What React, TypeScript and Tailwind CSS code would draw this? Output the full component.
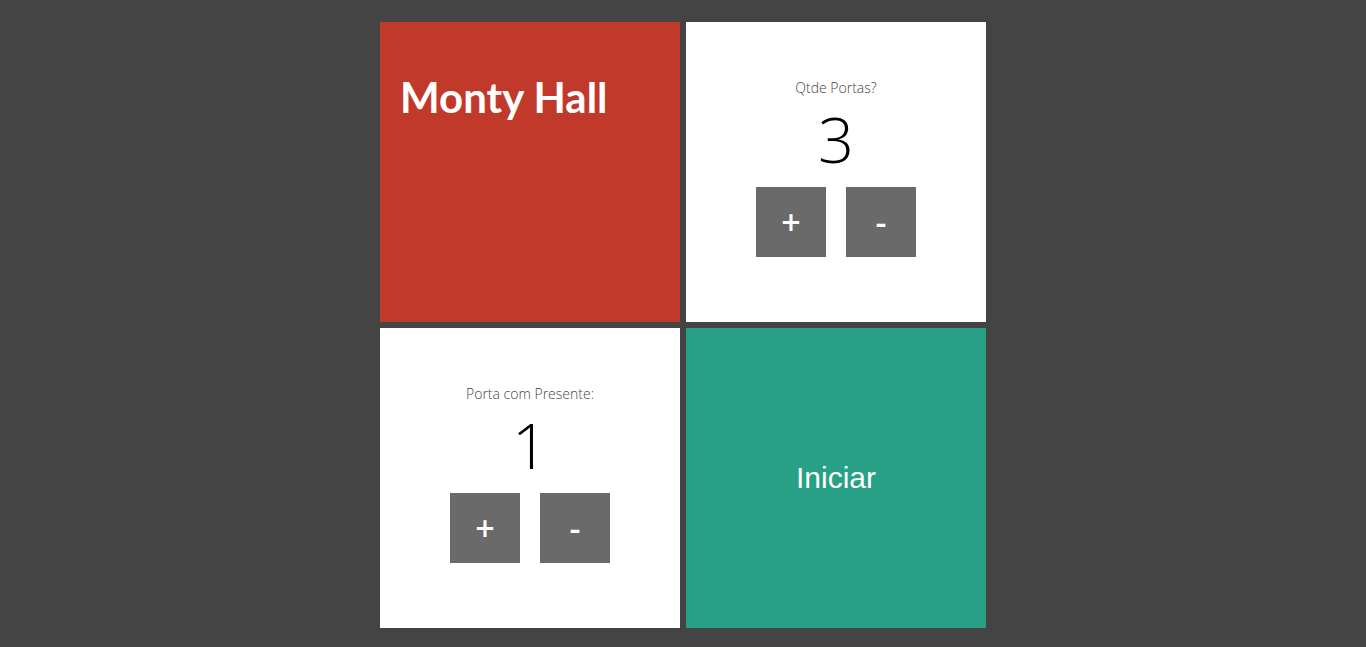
export default function App() {
  const Counter = ({ label, value }: { label: string; value: string }) => (
    <div className="bg-white w-[300px] h-[300px] flex flex-col items-center pt-[56px]">
      <div className="text-[14px] leading-[20px] font-light text-[#444]" style={{ fontFamily: '"Open Sans", sans-serif' }}>{label}</div>
      <div className="mt-[9px] text-[63px] leading-[63px] font-light text-black" style={{ fontFamily: '"Open Sans", sans-serif' }}>{value}</div>
      <div className="mt-[17px] flex gap-[20px]">
        <button className="w-[70px] h-[70px] bg-[#6a6a6a] text-white text-[34px] font-semibold flex items-center justify-center" style={{ fontFamily: '"Open Sans", sans-serif' }}>+</button>
        <button className="w-[70px] h-[70px] bg-[#6a6a6a] text-white text-[34px] font-semibold flex items-center justify-center" style={{ fontFamily: '"Open Sans", sans-serif' }}>-</button>
      </div>
    </div>
  );
  return (
    <div className="w-full h-screen bg-[#444444] flex justify-center pt-[22px]">
      <div className="grid grid-cols-[300px_300px] gap-[6px] h-fit">
        <div className="bg-[#c0392b] w-[300px] h-[300px] pt-[50px] pl-[20px]">
          <h1 className="text-white text-[42px] font-bold leading-[1.2]" style={{ fontFamily: 'Lato, sans-serif' }}>Monty Hall</h1>
        </div>
        <Counter label="Qtde Portas?" value="3" />
        <Counter label="Porta com Presente:" value="1" />
        <div className="bg-[#27a085] w-[300px] h-[300px] flex items-center justify-center pb-[2px]">
          <span className="text-white text-[30px]" style={{ fontFamily: '"Liberation Sans", Arial, sans-serif' }}>Iniciar</span>
        </div>
      </div>
    </div>
  );
}
